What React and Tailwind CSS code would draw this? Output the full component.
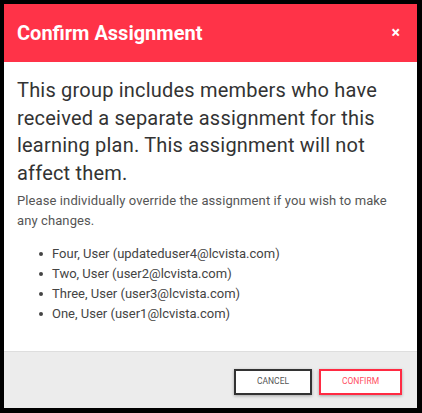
export default function App() {
  const users = [
    "Four, User (updateduser4@lcvista.com)",
    "Two, User (user2@lcvista.com)",
    "Three, User (user3@lcvista.com)",
    "One, User (user1@lcvista.com)",
  ];
  return (
    <div className="w-[422px] h-[413px] bg-black pl-[4px] pr-[5px] pb-[5px] pt-[4px] flex flex-col" style={{ fontFamily: "Roboto, 'Liberation Sans', sans-serif" }}>
      <div className="flex-1 flex flex-col bg-white">
        <div className="h-[58px] bg-[#ff3348] flex items-center justify-between pl-[13px] pr-[17px] shrink-0">
          <span className="text-white font-bold text-[20px]">Confirm Assignment</span>
          <span className="text-white font-bold text-[16px] leading-none">×</span>
        </div>
        <div className="flex-1 px-[13px] pt-[15px]">
          <p className="text-[20px] leading-[27.5px] text-[#333] tracking-[0.2px]">
            This group includes members who have received a separate assignment for this learning plan. This assignment will not affect them.
          </p>
          <p className="mt-[4px] text-[13px] leading-[20px] text-[#555] tracking-[0.1px]">
            Please individually override the assignment if you wish to make any changes.
          </p>
          <ul className="mt-[13px] text-[13px] leading-[20px] text-[#444]">
            {users.map((u) => (
              <li key={u} className="flex items-center">
                <span className="w-[4px] h-[4px] rounded-full bg-[#444] ml-[22px] mr-[9px]" />
                <span>{u}</span>
              </li>
            ))}
          </ul>
        </div>
        <div className="h-[57px] shrink-0 bg-[#ececec] border-t border-[#dedede] flex items-center justify-end gap-[7px] pr-[15px] pt-[3px]">
          <button className="w-[78px] h-[26px] border-2 border-[#333] bg-white text-[8.5px] text-[#555] uppercase shadow-[0_1px_3px_rgba(0,0,0,0.3)]">Cancel</button>
          <button className="w-[83px] h-[26px] border-2 border-[#ff2a42] bg-white text-[8.5px] text-[#ff4d62] uppercase shadow-[0_1px_3px_rgba(0,0,0,0.3)]">Confirm</button>
        </div>
      </div>
    </div>
  );
}
